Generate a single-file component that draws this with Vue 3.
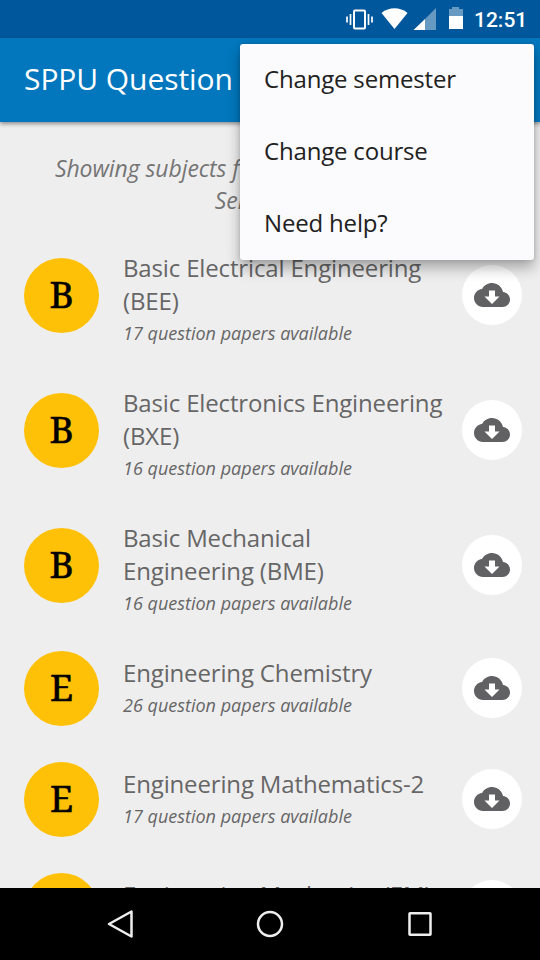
<script setup>
import { ref } from 'vue'

const menuOpen = ref(true)

const menuItems = ['Change semester', 'Change course', 'Need help?']

const subjects = ref([
  { name: 'Basic Electrical Engineering (BEE)', papers: 17 },
  { name: 'Basic Electronics Engineering (BXE)', papers: 16 },
  { name: 'Basic Mechanical Engineering (BME)', papers: 16 },
  { name: 'Engineering Chemistry', papers: 26 },
  { name: 'Engineering Mathematics-2', papers: 17 },
  { name: 'Engineering Mechanics (EM)', papers: 17 }
])

const closeMenu = () => {
  menuOpen.value = false
}
</script>

<template>
  <div class="screen">
    <!-- status bar -->
    <div class="status-bar">
      <svg class="status-icons" width="130" height="38" viewBox="0 0 130 38">
        <!-- vibrate -->
        <g fill="none" stroke="#fff">
          <rect x="14" y="10.5" width="11" height="18" rx="1" stroke-width="2" />
          <path d="M10.500 14v11M7 16.500v6M28.500 14v11M32 16.500v6" stroke-width="1.700" />
        </g>
        <!-- wifi -->
        <path d="M41.500 13C49 6.800 60 6.800 67.500 13L54.500 29z" fill="#fff" />
        <!-- signal -->
        <path d="M96 8v22H85V19z" fill="#fff" fill-opacity="0.4" />
        <path d="M85 19v11H73.500z" fill="#fff" />
        <!-- battery -->
        <path d="M109 9h3V7h7v2h4v7h-14z" fill="#fff" fill-opacity="0.4" />
        <path d="M109 16h14v13h-14z" fill="#fff" />
      </svg>
      <span class="clock">12:51</span>
    </div>

    <!-- app bar -->
    <header class="app-bar">
      <h1 class="app-title">SPPU Question Papers</h1>
    </header>

    <!-- subject list -->
    <main class="content">
      <p class="summary">Showing subjects for First Year Engineering<br />Semester 2</p>

      <ul class="subject-list">
        <li v-for="subject in subjects" :key="subject.name" class="subject">
          <div class="avatar">{{ subject.name[0] }}</div>
          <div class="subject-info">
            <div class="subject-name">{{ subject.name }}</div>
            <div class="subject-papers">{{ subject.papers }} question papers available</div>
          </div>
          <button class="download-btn" aria-label="Download">
            <svg width="36" height="36" viewBox="0 0 24 24">
              <path
                fill="#616063"
                d="M19.35 10.040C18.670 6.590 15.640 4 12 4 9.110 4 6.600 5.640 5.350 8.040 2.340 8.360 0 10.910 0 14c0 3.310 2.690 6 6 6h13c2.760 0 5-2.240 5-5 0-2.640-2.050-4.780-4.650-4.960zM17 13l-5 5-5-5h3V9h4v4h3z"
              />
            </svg>
          </button>
        </li>
      </ul>
    </main>

    <!-- navigation bar -->
    <nav class="nav-bar">
      <svg width="36" height="36" viewBox="0 0 36 36">
        <path d="M29.500 5.500v25L7 18z" />
      </svg>
      <svg width="36" height="36" viewBox="0 0 36 36">
        <circle cx="18" cy="18" r="12" />
      </svg>
      <svg width="36" height="36" viewBox="0 0 36 36">
        <rect x="7.500" y="7.300" width="21" height="21.500" rx="0.500" />
      </svg>
    </nav>

    <!-- overflow menu -->
    <div v-if="menuOpen" class="menu">
      <button v-for="item in menuItems" :key="item" class="menu-item" @click="closeMenu">
        {{ item }}
      </button>
    </div>
  </div>
</template>

<style>
body {
  margin: 0;
  overflow: hidden;
}
</style>

<style scoped>
.screen {
  position: relative;
  width: 540px;
  height: 960px;
  display: flex;
  flex-direction: column;
  overflow: hidden;
  background: #efeeef;
  font-family: 'Open Sans', 'Noto Sans', sans-serif;
}

/* status bar */
.status-bar {
  flex: none;
  height: 38px;
  display: flex;
  align-items: center;
  justify-content: flex-end;
  padding-right: 13px;
  background: #01579b;
  color: #fff;
}

.status-icons {
  margin-right: 4px;
}

.clock {
  font-family: Roboto, sans-serif;
  font-size: 21px;
  font-weight: 500;
  line-height: 36px;
  padding-top: 2px;
  width: 53px;
  white-space: nowrap;
}

/* app bar */
.app-bar {
  position: relative;
  flex: none;
  box-sizing: border-box;
  height: 84px;
  display: flex;
  align-items: center;
  padding: 0 24px 3px;
  background: #0277bd;
  box-shadow: 0 2px 4px rgba(0, 0, 0, 0.4);
}

.app-title {
  margin: 0;
  font-size: 30px;
  font-weight: 400;
  letter-spacing: -0.07px;
  white-space: nowrap;
  color: #fff;
}

/* list */
.content {
  flex: 1;
  min-height: 0;
  overflow: hidden;
}

.summary {
  height: 76px;
  margin: 0;
  padding-top: 30px;
  font-size: 23px;
  font-style: italic;
  line-height: 32px;
  letter-spacing: -0.08px;
  text-align: center;
  white-space: nowrap;
  color: #757575;
}

.subject-list {
  margin: 0;
  padding: 0;
  list-style: none;
}

.subject {
  display: flex;
  align-items: center;
  gap: 24px;
  padding: 18px 18px 18px 24px;
}

.avatar {
  flex: none;
  width: 75px;
  height: 75px;
  border-radius: 50%;
  background: #ffc107;
  color: #000;
  font-family: 'Noto Serif', 'DejaVu Serif Condensed', 'DejaVu Serif', serif;
  font-size: 37px;
  line-height: 71px;
  text-align: center;
  -webkit-text-stroke: 0.6px #000;
}

.subject-info {
  flex: 1;
  align-self: flex-start;
  min-width: 0;
  padding: 5px 0 1px;
}

.subject-name {
  margin-right: -6px;
  font-size: 24px;
  line-height: 33px;
  letter-spacing: -0.15px;
  color: #666;
}

.subject-papers {
  padding-top: 6px;
  font-size: 18px;
  font-style: italic;
  line-height: 21px;
  color: #666;
}

.download-btn {
  flex: none;
  width: 60px;
  height: 60px;
  display: flex;
  align-items: center;
  justify-content: center;
  margin-bottom: 1px;
  padding: 0;
  border: none;
  border-radius: 50%;
  background: #fff;
}

/* navigation bar */
.nav-bar {
  position: relative;
  flex: none;
  height: 72px;
  display: flex;
  align-items: center;
  justify-content: center;
  gap: 114px;
  background: #000;
}

.nav-bar svg {
  fill: none;
  stroke: #eee;
  stroke-width: 2.5;
  stroke-linejoin: round;
}

/* overflow menu */
.menu {
  position: absolute;
  top: 44px;
  right: 6px;
  width: 294px;
  height: 216px;
  display: flex;
  flex-direction: column;
  border-radius: 3px;
  background: #fbfafc;
  box-shadow: 0 8px 14px rgba(0, 0, 0, 0.3), 0 0 4px rgba(0, 0, 0, 0.15);
}

.menu-item {
  flex: 1;
  padding: 0 24px 4px;
  border: none;
  background: none;
  font-family: inherit;
  font-size: 24px;
  letter-spacing: -0.18px;
  text-align: left;
  color: #212121;
}
</style>
